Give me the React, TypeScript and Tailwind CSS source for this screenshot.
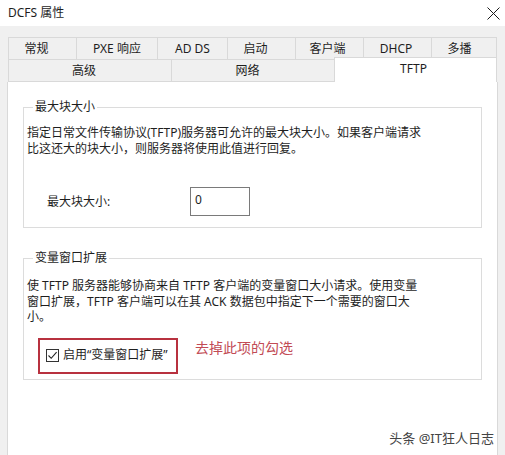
import React from "react";

const font = { fontFamily: '"Noto Sans", "Noto Sans CJK SC", sans-serif' };

const topTabs = [
  { label: "常规", w: "w-[68px]", pad: "pr-[12px]" },
  { label: "PXE 响应", w: "w-[81px]", pad: "" },
  { label: "AD DS", w: "w-[70px]", pad: "" },
  { label: "启动", w: "w-[68px]", pad: "pr-[12px]" },
  { label: "客户端", w: "w-[68px]", pad: "pr-[4px]" },
  { label: "DHCP", w: "w-[68px]", pad: "pr-[3px]" },
  { label: "多播", w: "w-[66px]", pad: "pr-[9px]" },
];

function CloseIcon() {
  return (
    <svg width="13" height="13" viewBox="0 0 13 13" fill="none">
      <path d="M0.5 0.5L12.5 12.5M12.5 0.5L0.5 12.5" stroke="#1a1a1a" strokeWidth="1" />
    </svg>
  );
}

function CheckBox() {
  return (
    <span className="flex h-[13px] w-[13px] shrink-0 items-center justify-center border border-[#333333] bg-white">
      <svg width="11" height="11" viewBox="0 0 11 11" fill="none">
        <path d="M1.5 5.5L4.2 8.3L9.6 2.2" stroke="#222222" strokeWidth="1.1" />
      </svg>
    </span>
  );
}

export default function App() {
  return (
    <div className="relative flex h-[455px] w-[505px] flex-col overflow-hidden text-[12px] text-[#1e1e1e]" style={font}>
      {/* title bar */}
      <div className="flex h-[26px] items-center justify-between bg-white pl-[8px] pr-[5px]">
        <span className="leading-[16px]">DCFS 属性</span>
        <CloseIcon />
      </div>

      <div className="flex flex-1 flex-col bg-[#f0f0f0] pl-[7px] pt-[11px]">
        {/* tab row 1 */}
        <div className="ml-[1px] flex h-[22px]">
          {topTabs.map((t, i) => (
            <div
              key={t.label}
              className={`flex items-center justify-center border-l border-t border-[#d9d9d9] ${t.w} ${t.pad} ${
                i === topTabs.length - 1 ? "border-r" : ""
              }`}
            >
              <span className="leading-[16px] pt-[1px]">{t.label}</span>
            </div>
          ))}
        </div>

        {/* tab row 2 */}
        <div className="ml-[1px] flex h-[23px] items-end">
          <div className="flex h-[23px] w-[163px] items-center justify-center border-b border-l border-t border-[#d9d9d9] pr-[12px]">
            <span className="leading-[16px] pt-[1px]">高级</span>
          </div>
          <div className="flex h-[23px] w-[164px] items-center justify-center border-b border-l border-t border-[#d9d9d9] pr-[12px]">
            <span className="leading-[16px] pt-[1px]">网络</span>
          </div>
          <div className="relative z-10 -ml-[1px] flex h-[25px] w-[163px] items-start justify-center border-l border-r border-t border-[#d9d9d9] bg-white pr-[4px] pt-[3px]">
            <span className="leading-[16px]">TFTP</span>
          </div>
        </div>

        {/* page */}
        <div className="flex w-[491px] flex-1 flex-col border-l border-r border-[#d9d9d9] bg-white px-[15px] pt-[17px]">
          <fieldset className="border border-[#dcdcdc] pb-[11px] pl-[3px]">
            <legend className="ml-[6px] px-[2px] leading-[16px]">最大块大小</legend>
            <p className="mt-[10px] whitespace-nowrap leading-[16px]">
              指定日常文件传输协议(TFTP)服务器可允许的最大块大小。如果客户端请求
              <br />
              比这还大的块大小，则服务器将使用此值进行回复。
            </p>
            <div className="mt-[30px] flex items-center">
              <span className="ml-[20px] w-[143px] leading-[16px]">最大块大小:</span>
              <div className="flex h-[29px] w-[60px] items-start border border-[#7a7a7a] pl-[4px] pt-[4px]">
                <span className="leading-[16px]">0</span>
              </div>
            </div>
          </fieldset>

          <fieldset className="mt-[22px] border border-[#dcdcdc] pb-[5px] pl-[3px]">
            <legend className="ml-[6px] px-[2px] leading-[16px]">变量窗口扩展</legend>
            <p className="mt-[12px] whitespace-nowrap leading-[15.5px]">
              使 TFTP 服务器能够协商来自 TFTP 客户端的变量窗口大小请求。使用变量
              <br />
              窗口扩展，TFTP 客户端可以在其 ACK 数据包中指定下一个需要的窗口大
              <br />
              小。
            </p>
            <div className="mt-[13px] flex items-start">
              <div className="ml-[11px] flex h-[36px] w-[140px] items-center gap-[4px] border-2 border-[#b8313f] pb-[1px] pl-[6px]">
                <CheckBox />
                <span className="whitespace-nowrap leading-[16px]">启用“变量窗口扩展”</span>
              </div>
              <span className="ml-[17px] mt-[1px] text-[14px] leading-[18px] text-[#c24b55]">去掉此项的勾选</span>
            </div>
          </fieldset>
        </div>
      </div>

      <span className="absolute bottom-[8px] right-[11px] text-[13px] leading-[18px] text-[#444444] [text-shadow:0_0_2px_#ffffff]">
        头条 @IT狂人日志
      </span>
    </div>
  );
}
